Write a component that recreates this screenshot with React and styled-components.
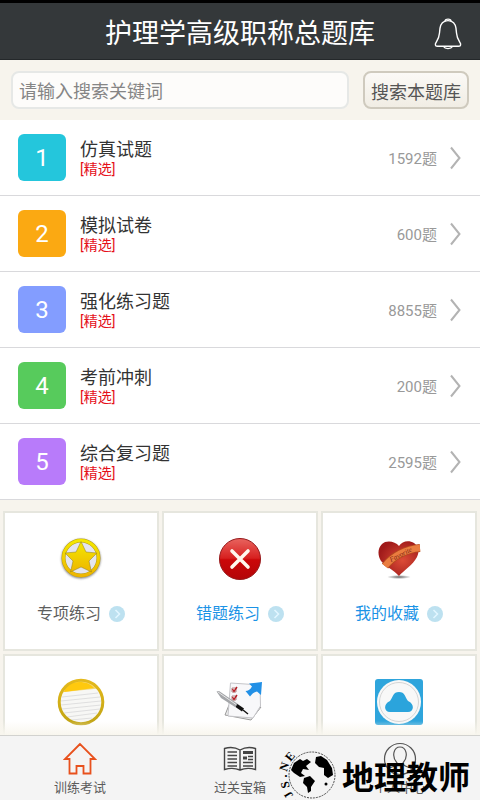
import { useState } from 'react';
import styled, { createGlobalStyle } from 'styled-components';

const GlobalStyle = createGlobalStyle`
  * {
    box-sizing: border-box;
  }

  body {
    margin: 0;
    font-family: Roboto, 'Noto Sans CJK SC', sans-serif;
    background: #f7f4ed;
  }

  button, input {
    font: inherit;
    margin: 0;
  }
`;

const Page = styled.div`
  height: 100vh;
  display: flex;
  flex-direction: column;
`;

const Header = styled.header`
  flex: none;
  height: 60px;
  padding: 6px 16px 0;
  border-top: 3px solid #000;
  border-bottom: 1px solid #24282a;
  display: grid;
  grid-template-columns: 32px 1fr 32px;
  align-items: center;
  background: #34383a;
`;

const Title = styled.h1`
  grid-column: 2;
  margin: 0;
  font-size: 27px;
  line-height: 36px;
  font-weight: 400;
  text-align: center;
  white-space: nowrap;
  color: #fff;
`;

const BellButton = styled.button`
  padding: 0;
  border: 0;
  display: flex;
  justify-content: center;
  background: none;
`;

const SearchBar = styled.form`
  flex: none;
  height: 60px;
  padding: 11px;
  display: flex;
  gap: 14px;
  background: #f7f4ed;
`;

const SearchInput = styled.input`
  flex: 1;
  min-width: 0;
  padding: 2px 6px 0;
  border: 2px solid #e6e8e6;
  border-radius: 8px;
  font-size: 18px;
  color: #444;
  background: #fdfcfa;

  &::placeholder {
    color: #858585;
    opacity: 1;
  }
`;

const SearchButton = styled.button`
  flex: none;
  padding: 2px 6px 0;
  border: 2px solid #cfcabe;
  border-radius: 8px;
  font-size: 18px;
  white-space: nowrap;
  color: #555;
  background: linear-gradient(#fbf9f6, #f1ede4);
`;

// Everything between the search bar and the tab bar scrolls
const Content = styled.main`
  flex: 1;
  min-height: 0;
  overflow-y: auto;
  scrollbar-width: none;
`;

const PaperList = styled.ul`
  margin: 0;
  padding: 0;
  list-style: none;
  background: #fff;
`;

const PaperRow = styled.li`
  height: 76px;
  padding: 0 18px;
  border-bottom: 1px solid #d9d9dc;
  display: flex;
  align-items: center;
`;

const PaperNumber = styled.span`
  width: 48px;
  height: 47px;
  border-radius: 6px;
  font-size: 24px;
  line-height: 49px;
  text-align: center;
  color: #fff;
  background: ${({ $color }) => $color};
`;

const PaperInfo = styled.div`
  flex: 1;
  padding: 2px 0 0 14px;
`;

const PaperName = styled.div`
  font-size: 18px;
  line-height: 21px;
  color: #333;
`;

const PaperTag = styled.div`
  font-size: 14px;
  line-height: 18px;
  color: #e50f1a;
`;

const PaperCount = styled.span`
  margin-right: 12px;
  font-size: 15px;
  color: #999;
`;

const CardGrid = styled.section`
  padding: 11px 3px;
  display: grid;
  grid-template-columns: repeat(3, 1fr);
  gap: 3px;
`;

const Card = styled.button`
  height: 140px;
  padding: 21px 0 0;
  border: 2px solid #e6e6de;
  display: flex;
  flex-direction: column;
  align-items: center;
  gap: 18px;
  background: #fff;
`;

const CardLabel = styled.span`
  display: flex;
  align-items: center;
  gap: 8px;
  font-size: 16px;
  line-height: 24px;
  color: ${({ $active }) => ($active ? '#1b93e6' : '#5e5e5e')};
`;

const TabBar = styled.nav`
  position: relative;
  flex: none;
  height: 65px;
  border-top: 1px solid #d2d2cf;
  display: grid;
  grid-template-columns: repeat(3, 1fr);
  background: #f4f4f4;

  &::before {
    content: '';
    position: absolute;
    right: 0;
    bottom: calc(100% + 1px);
    left: 0;
    height: 14px;
    background: linear-gradient(rgba(247, 244, 234, 0), #f8f6ee);
  }
`;

const Tab = styled.button`
  padding: 6px 0 0;
  border: 0;
  display: flex;
  flex-direction: column;
  align-items: center;
  gap: 2px;
  font-size: 13px;
  line-height: 20px;
  color: #5c5c5c;
  background: none;
`;

const Brand = styled.div`
  position: absolute;
  right: 10px;
  bottom: 0;
  display: flex;
  align-items: center;
  gap: 6px;
  pointer-events: none;
`;

const BrandName = styled.span`
  padding-top: 6px;
  font-size: 32px;
  line-height: 40px;
  font-weight: 700;
  white-space: nowrap;
  color: #000;
`;

const BellIcon = () => (
  <svg width="28" height="32" viewBox="0 0 28 32" fill="none" stroke="#fff" strokeWidth="1.4">
    <path d="M11 3.2C11 .4 17 .4 17 3.2C22 5 22 10 22.500 15C22.800 20 24.500 22 26.500 25.500C27 28 26 28.300 24.500 28.300H3.500C2 28.300 1 28 1.500 25.500C3.500 22 5.200 20 5.500 15C6 10 6 5 11 3.200Z" />
    <path d="M9.500 28.500C11 31.300 17 31.300 18.500 28.500M11 3.200Q14 2 17 3.200" />
  </svg>
);

const RowArrow = () => (
  <svg width="13" height="24" viewBox="0 0 13 24" fill="none" stroke="#b3b3b3" strokeWidth="2">
    <path d="M2 1.500L10.500 12L2 22.500" />
  </svg>
);

const RoundArrow = () => (
  <svg width="16" height="16" viewBox="0 0 16 16">
    <circle cx="8" cy="8" r="8" fill="#bde1f0" />
    <path d="M6.500 4L10.500 8L6.500 12" fill="none" stroke="#e3f6ff" strokeWidth="1.500" />
  </svg>
);

const StarIcon = () => (
  <svg width="50" height="50" viewBox="0 0 50 50">
    <defs>
      <linearGradient id="gold" x1="0" y1="0" x2="0" y2="1">
        <stop offset="0" stopColor="#f4e800" />
        <stop offset="1" stopColor="#eeb600" />
      </linearGradient>
      <filter id="starShadow" x="-20%" y="-20%" width="140%" height="150%">
        <feDropShadow dx="0" dy="1" stdDeviation="1.200" floodColor="#444" floodOpacity="0.700" />
      </filter>
    </defs>
    <g filter="url(#starShadow)">
      <circle cx="25" cy="24" r="17.500" fill="#e4e5ee" stroke="#b39a18" strokeWidth="4" />
      <circle cx="25" cy="24" r="17.500" fill="none" stroke="url(#gold)" strokeWidth="3" />
      <path
        d="M25 7.500L30 18L41 19L33 27L35.500 38L25 33L14.500 38L17 27L9 19L20 18Z"
        fill="url(#gold)"
        stroke="#8f7a20"
        strokeWidth="0.500"
      />
    </g>
  </svg>
);

const WrongIcon = () => (
  <svg width="50" height="50" viewBox="0 0 50 50">
    <defs>
      <linearGradient id="redBall" x1="0" y1="0" x2="0" y2="1">
        <stop offset="0" stopColor="#e8645f" />
        <stop offset="0.480" stopColor="#d7201f" />
        <stop offset="0.520" stopColor="#cb0709" />
        <stop offset="1" stopColor="#b30508" />
      </linearGradient>
    </defs>
    <circle cx="25" cy="25" r="20.500" fill="url(#redBall)" stroke="#97181a" />
    <path d="M17 17L33 33M33 17L17 33" stroke="#fff8ee" strokeWidth="3.600" strokeLinecap="round" />
  </svg>
);

const HeartIcon = () => (
  <svg width="50" height="50" viewBox="0 0 50 50">
    <defs>
      <radialGradient id="heart" cx="0.600" cy="0.550" r="0.600">
        <stop offset="0" stopColor="#dc4c37" />
        <stop offset="1" stopColor="#a01a1a" />
      </radialGradient>
      <radialGradient id="heartShadow">
        <stop offset="0" stopColor="#666" />
        <stop offset="1" stopColor="#fff" />
      </radialGradient>
    </defs>
    <ellipse cx="25" cy="43" rx="12" ry="2" fill="url(#heartShadow)" />
    <path
      d="M25 12C21 7 12 6 8 10C3 15 4 22 7 27C12 33 20 36 25 42C30 36 39 31 43 23C46 17 44 12 40 9C35 6 28 7 25 12Z"
      fill="url(#heart)"
    />
    <path d="M11 32C19 22 32 15 46 14" fill="none" stroke="#b54a1e" strokeWidth="8" />
    <path d="M11 32C19 22 32 15 46 14" fill="none" stroke="#ea7d40" strokeWidth="6.500" />
    <text x="17" y="28" fontSize="7" fontStyle="italic" fontFamily="Liberation Serif, serif" fill="#7c2412" transform="rotate(-27 17 28)">
      Favorite
    </text>
  </svg>
);

const NoteIcon = () => (
  <svg width="50" height="50" viewBox="0 0 50 50">
    <defs>
      <clipPath id="noteClip">
        <circle cx="25" cy="25" r="21" />
      </clipPath>
      <linearGradient id="noteRing" x1="0" y1="0" x2="0" y2="1">
        <stop offset="0" stopColor="#e4b91c" />
        <stop offset="1" stopColor="#c1a414" />
      </linearGradient>
    </defs>
    <g clipPath="url(#noteClip)">
      <rect width="50" height="50" fill="#f7f7f5" />
      <path d="M0 0H50V10L38 12L8 15L0 20Z" fill="#f3d879" />
      <path d="M11 8C20 3 33 4 38 11L8 15Z" fill="#ffc90e" />
      <path
        d="M6 20L42 16M5 24L44 20M5 28L45 24M6 32L45 28M8 36L44 32M11 40L41 36M15 43L36 41"
        stroke="#dfdfdf"
        strokeWidth="1"
      />
    </g>
    <circle cx="25" cy="25" r="21.800" fill="none" stroke="url(#noteRing)" strokeWidth="3" />
  </svg>
);

const ExamIcon = () => (
  <svg width="50" height="50" viewBox="0 0 50 50">
    <path d="M14 28L10 38L36 43L46 30Z" fill="#eee" stroke="#9a9a9a" />
    <path d="M15.500 6L45 8L45.500 29L38 41L13 39Z" fill="#f8f8fa" stroke="#c4c4c8" />
    <path d="M17 11H21V15H17ZM17 19H21V23H17Z" fill="none" stroke="#9f6767" strokeWidth="0.800" />
    <path d="M17.500 12L19 14.500L22 10M17.500 20L19 22.500L22 18" fill="none" stroke="#b61e26" strokeWidth="1.400" />
    <path d="M1.500 14.500L4 14L23 27L20 30L6 21Z" fill="#a4a6a9" />
    <path d="M3 15L21 27.500" stroke="#e8e8e8" />
    <path d="M21.500 28.500L28 33" stroke="#111" strokeWidth="3.600" />
    <path d="M28 33L33 37" stroke="#111" strokeWidth="1.400" />
    <path d="M47 5L34 6.500L37 9.500C35 13 33 14 30.500 14L35 19.500C37 17 39 15 42 14.500L46 18Z" fill="#2290e6" />
  </svg>
);

const CloudIcon = () => (
  <svg width="50" height="50" viewBox="0 0 50 50">
    <rect x="1" y="2" width="48" height="46" rx="3" fill="#2fa5dc" />
    <circle cx="25" cy="25" r="22" fill="#f8f8f8" />
    <circle cx="25" cy="25" r="19.500" fill="none" stroke="#ccc" strokeWidth="0.800" />
    <path d="M16 35C10 35 9 27 16 24C19 20 19 15 25 15C31 15 31 20 34 24C41 27 40 35 34 35Z" fill="#2ba4dc" />
  </svg>
);

const HomeIcon = () => (
  <svg width="34" height="34" viewBox="0 0 34 34" fill="none" stroke="#e8511d" strokeWidth="1.800">
    <path d="M17 2L2 17H6.500V31.500H13.500V24H20.500V31.500H27.500V17H32Z" />
  </svg>
);

const BookIcon = () => (
  <svg width="34" height="34" viewBox="0 0 34 34" fill="none" stroke="#444">
    <path d="M17 8Q10 4 1.500 6.500V27.500Q10 25 17 28Q24 25 32.500 27.500V6.500Q24 4 17 8V28" strokeWidth="1.400" />
    <path d="M4.500 10H14M4.500 13.500H14M4.500 17H14M4.500 20.500H14M4.500 24H14M25 14.500H30M25 17.500H30M20 20.500H30M20 24H30" strokeWidth="1.300" />
    <path d="M20 10.500H30M20 16H24" strokeWidth="3" />
  </svg>
);

const UserIcon = () => (
  <svg width="34" height="34" viewBox="0 0 34 34" fill="none" stroke="#555" strokeWidth="1.200">
    <circle cx="17" cy="17" r="15.500" />
    <path d="M5 27C9 24 14 25 14 21C8 14 11 5 17 5C23 5 26 14 20 21C20 25 25 24 29 27" />
  </svg>
);

const GlobeLogo = () => (
  <svg width="58" height="50" viewBox="0 0 58 50">
    <circle cx="34" cy="25" r="23" fill="#f4f4f4" stroke="#222" strokeWidth="0.800" strokeDasharray="2 1" />
    <path d="M13 20L16 13L22 9L25 11L29 9L33 12L28 16L31 20L25 19L23 23L27 26L22 27L16 23Z" fill="#000" />
    <path d="M38 7L43 6L49 10L54 18L55 25L50 28L46 25L46 18L41 17L37 13Z" fill="#000" />
    <path d="M26 28L32 26L37 31L33 37L33 41L30 43L29 37L25 33Z" fill="#000" />
    <circle cx="48" cy="34" r="1.500" fill="#000" />
    <g fontFamily="Liberation Serif, serif" fontSize="12" fontWeight="700" fill="#000" textAnchor="middle">
      <text transform="translate(20 52) rotate(-140)">L</text>
      <text transform="translate(14 43) rotate(-122)">J</text>
      <text transform="translate(11 34) rotate(-103)">S</text>
      <text transform="translate(9 26) rotate(-90)">.</text>
      <text transform="translate(10 18) rotate(-72)">N</text>
      <text transform="translate(15 9) rotate(-50)">E</text>
    </g>
  </svg>
);

const papers = [
  { name: '仿真试题', count: 1592, color: '#24c6dc' },
  { name: '模拟试卷', count: 600, color: '#fba912' },
  { name: '强化练习题', count: 8855, color: '#839dff' },
  { name: '考前冲刺', count: 200, color: '#57cb5c' },
  { name: '综合复习题', count: 2595, color: '#b87bfa' },
];

const cards = [
  { label: '专项练习', Icon: StarIcon },
  { label: '错题练习', Icon: WrongIcon, active: true },
  { label: '我的收藏', Icon: HeartIcon, active: true },
  { title: '笔记', Icon: NoteIcon },
  { title: '考试', Icon: ExamIcon },
  { title: '云', Icon: CloudIcon },
];

const tabs = [
  { label: '训练考试', Icon: HomeIcon },
  { label: '过关宝箱', Icon: BookIcon },
  { label: '个人中心', Icon: UserIcon },
];

const App = () => {
  const [keyword, setKeyword] = useState('');

  return (
    <Page>
      <GlobalStyle />
      <Header>
        <Title>护理学高级职称总题库</Title>
        <BellButton type="button" aria-label="通知">
          <BellIcon />
        </BellButton>
      </Header>
      <SearchBar onSubmit={(e) => e.preventDefault()}>
        <SearchInput
          type="text"
          aria-label="搜索"
          placeholder="请输入搜索关键词"
          value={keyword}
          onChange={(e) => setKeyword(e.target.value)}
        />
        <SearchButton type="submit">搜索本题库</SearchButton>
      </SearchBar>
      <Content>
        <PaperList>
          {papers.map(({ name, count, color }, index) => (
            <PaperRow key={name}>
              <PaperNumber $color={color}>{index + 1}</PaperNumber>
              <PaperInfo>
                <PaperName>{name}</PaperName>
                <PaperTag>[精选]</PaperTag>
              </PaperInfo>
              <PaperCount>{count}题</PaperCount>
              <RowArrow />
            </PaperRow>
          ))}
        </PaperList>
        <CardGrid>
          {cards.map(({ label, title, Icon, active }) => (
            <Card key={label || title} type="button" aria-label={label || title}>
              <Icon />
              {label && (
                <CardLabel $active={active}>
                  {label}
                  <RoundArrow />
                </CardLabel>
              )}
            </Card>
          ))}
        </CardGrid>
      </Content>
      <TabBar>
        {tabs.map(({ label, Icon }) => (
          <Tab key={label} type="button">
            <Icon />
            {label}
          </Tab>
        ))}
        <Brand>
          <GlobeLogo />
          <BrandName>地理教师</BrandName>
        </Brand>
      </TabBar>
    </Page>
  );
};

export default App;
